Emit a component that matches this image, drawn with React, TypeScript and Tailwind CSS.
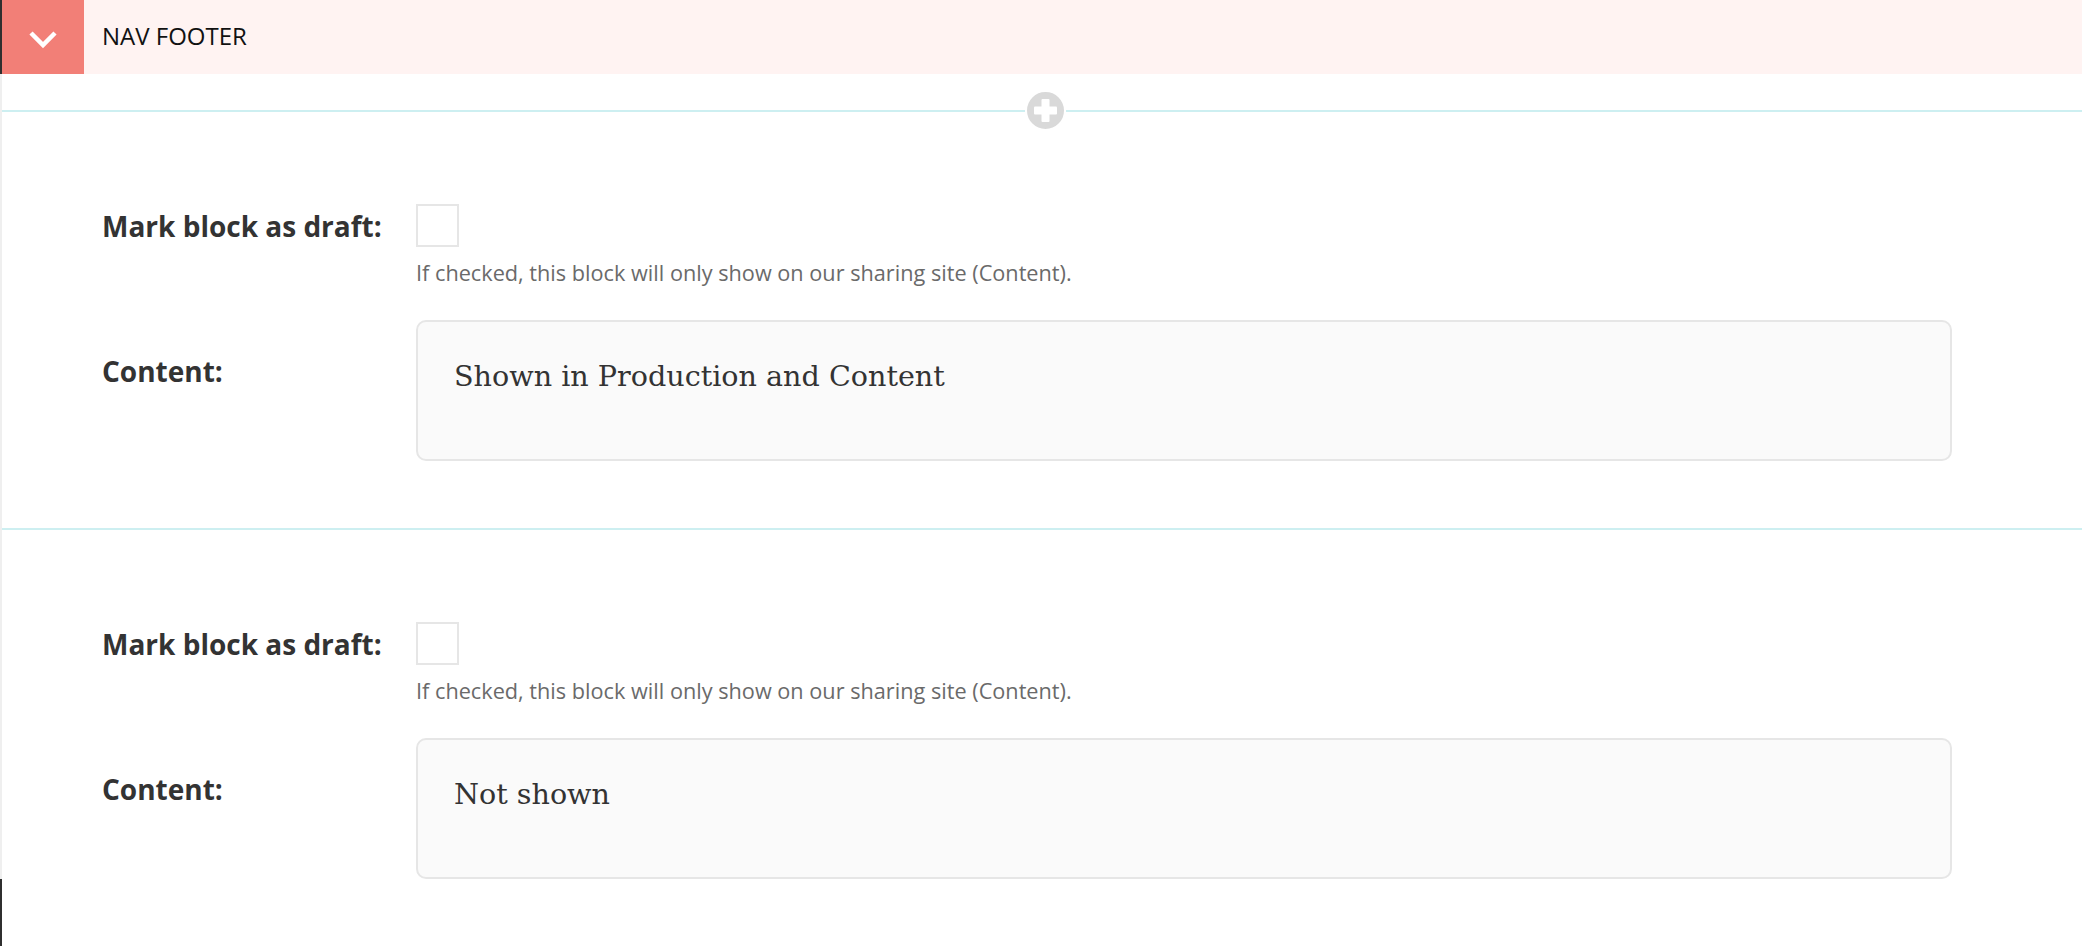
import React from "react";

const sans = { fontFamily: '"Open Sans", "Liberation Sans", sans-serif' };

function Chevron() {
	return (
		<svg width="30" height="20" viewBox="0 0 30 20" fill="none">
			<polyline points="3,4 15,16 27,4" stroke="#fff" strokeWidth="4.5" />
		</svg>
	);
}

function AddButton() {
	return (
		<div className="w-[41px] h-[41px] rounded-full border-2 border-white bg-[#d9d9d9] flex items-center justify-center">
			<svg width="23" height="23" viewBox="0 0 23 23">
				<rect x="7.5" y="0" width="8" height="23" rx="1" fill="#fff" />
				<rect x="0" y="7.5" width="23" height="8" rx="1" fill="#fff" />
			</svg>
		</div>
	);
}

function Block({ text }: { text: string }) {
	return (
		<div className="flex flex-col pl-[100px] pr-[130px]" style={sans}>
			<div className="flex items-center">
				<div className="w-[314px] shrink-0 text-[28px] leading-[34px] font-bold text-[#333]">Mark block as draft:</div>
				<div className="w-[43px] h-[43px] border-2 border-[#e6e6e6] bg-white"></div>
			</div>
			<div className="flex mt-[10px]">
				<div className="w-[314px] shrink-0"></div>
				<p className="text-[21.7px] leading-[32px] text-[#6a6a6a]">
					If checked, this block will only show on our sharing site (Content).
				</p>
			</div>
			<div className="flex items-start mt-[31px]">
				<div className="w-[314px] shrink-0 pt-[34px] text-[28px] leading-[34px] font-bold text-[#333]">Content:</div>
				<div className="flex-1 h-[141px] rounded-[10px] border-2 border-[#e6e6e6] bg-[#fafafa] pt-[37px] pl-[36px]">
					<div className="text-[28.6px] leading-[34px] text-[#333]" style={{ fontFamily: '"DejaVu Serif", "Liberation Serif", serif' }}>{text}</div>
				</div>
			</div>
		</div>
	);
}

export default function App() {
	return (
		<div className="min-h-screen w-full bg-white overflow-hidden">
			<header className="flex h-[74px] bg-[#fff3f2] border-l-2 border-[#2f2f2f]">
				<div className="w-[82px] h-full bg-[#f27f77] flex items-center justify-center pt-[4px]">
					<Chevron />
				</div>
				<div className="flex items-center pl-[18px] pb-[3px] text-[24px] text-[#111]" style={sans}>NAV FOOTER</div>
			</header>

			<main className="border-l-2 border-[#efefef] pt-[16px]">
				<div className="flex items-center h-[41px]">
					<div className="grow basis-[6px] h-[2px] bg-[#cdeff1]"></div>
					<AddButton />
					<div className="grow basis-0 h-[2px] bg-[#cdeff1]"></div>
				</div>

				<section className="pt-[73px] pb-[67px]">
					<Block text="Shown in Production and Content" />
				</section>

				<div className="h-[2px] bg-[#cdeff1]"></div>

				<section className="pt-[92px]">
					<Block text="Not shown" />
				</section>
			</main>

			<div className="h-[80px] border-l-2 border-[#2f2f2f]"></div>
		</div>
	);
}
